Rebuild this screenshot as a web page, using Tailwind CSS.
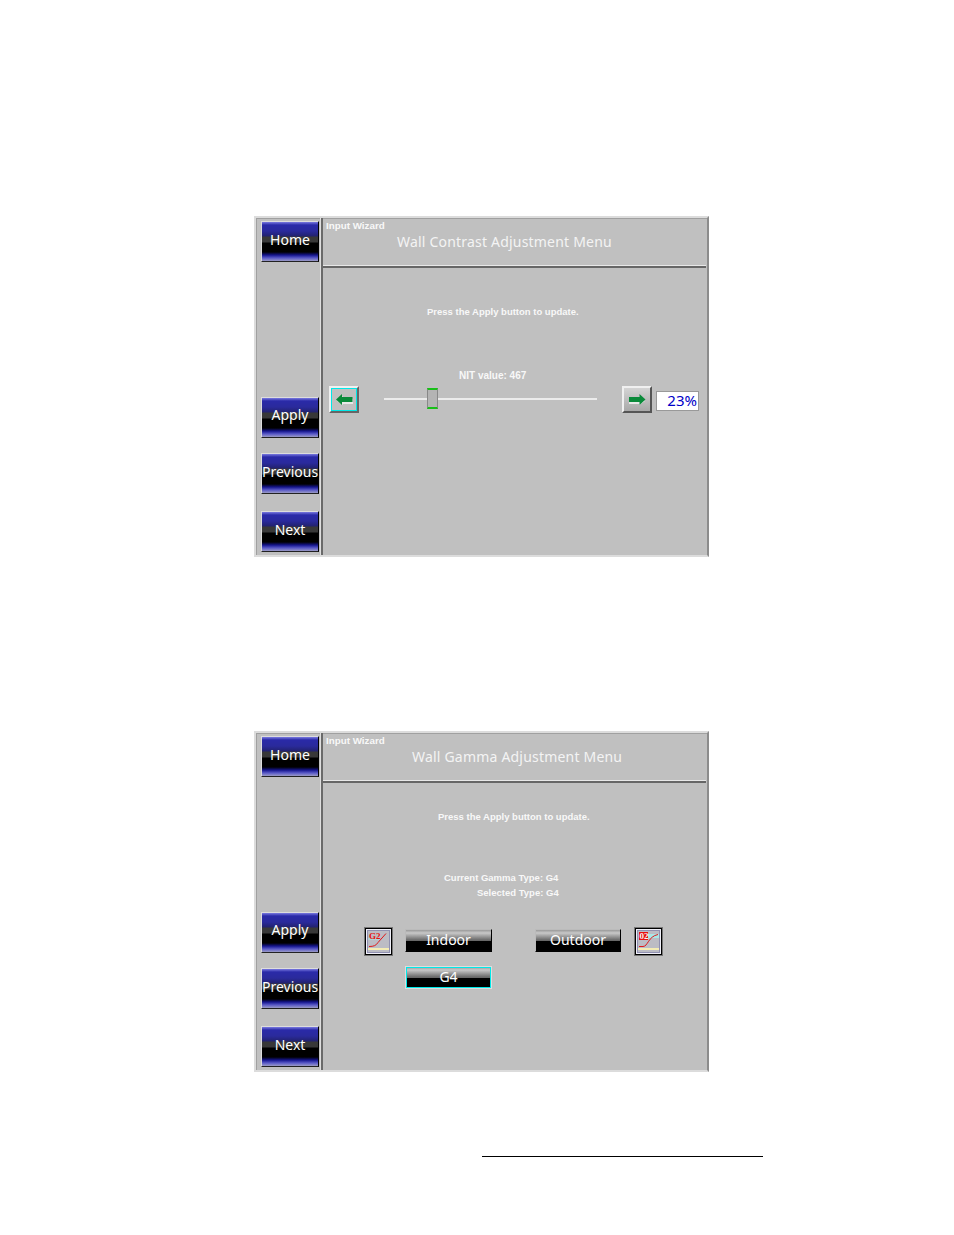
<!DOCTYPE html>
<html lang="en">
<head>
    <meta charset="UTF-8">
    <title>Wall Adjustment Menus</title>
    <script src="https://cdn.jsdelivr.net/npm/@tailwindcss/browser@4"></script>
</head>
<body class="bg-white font-['Noto_Sans',sans-serif]">
<div class="w-[954px] h-[1235px] overflow-hidden pt-[216px] pl-[254px]">

    <!-- Contrast panel -->
    <section class="w-[455px] h-[341px] flex bg-[#c0c0c0] border-2 border-[#dcdcdc] border-r-[#8c8c8c] shadow-[inset_1px_1px_0_#a0a0a0]">
        <aside class="w-[67px] shrink-0 border-r-2 border-[#6a6a6a] shadow-[inset_-1px_0_0_#dedede] pl-[5px] pt-[3px] flex flex-col">
            <button class="w-[58px] h-[41px] pb-[5px] border border-[#ddd] border-r-black border-b-[#222] bg-[linear-gradient(#7a7ae0_0,#2a2aa8_3px,#2a2a9c_9px,#222270_14px,#383838_15px,#383838_20px,#000_21px,#000_30px,#14148c_33px,#5a5ac8_36px,#b0b0c4_40px)] text-white text-[14px]">Home</button>
            <button class="mt-[135px] w-[58px] h-[41px] pb-[7px] border border-[#ddd] border-r-black border-b-[#222] bg-[linear-gradient(#7a7ae0_0,#2a2aa8_3px,#2a2a9c_9px,#222270_14px,#383838_15px,#383838_20px,#000_21px,#000_30px,#14148c_33px,#5a5ac8_36px,#b0b0c4_40px)] text-white text-[14px]">Apply</button>
            <button class="mt-[15px] w-[58px] h-[41px] pb-[5px] border border-[#ddd] border-r-black border-b-[#222] bg-[linear-gradient(#7a7ae0_0,#2a2aa8_3px,#2a2a9c_9px,#222270_14px,#383838_15px,#383838_20px,#000_21px,#000_30px,#14148c_33px,#5a5ac8_36px,#b0b0c4_40px)] text-white text-[14px] whitespace-nowrap">Previous</button>
            <button class="mt-[17px] w-[58px] h-[41px] pb-[5px] border border-[#ddd] border-r-black border-b-[#222] bg-[linear-gradient(#7a7ae0_0,#2a2aa8_3px,#2a2a9c_9px,#222270_14px,#383838_15px,#383838_20px,#000_21px,#000_30px,#14148c_33px,#5a5ac8_36px,#b0b0c4_40px)] text-white text-[14px]">Next</button>
        </aside>
        <div class="flex-1 flex flex-col">
            <header class="h-[50px] border-b-2 border-b-[#666] shadow-[0_-1px_0_#e8e8e8_inset] mr-[1px]">
                <p class="font-['Liberation_Sans',sans-serif] font-bold text-[9.800000px] leading-[14px] pt-px pl-[3px] text-[#f8f8f8]">Input Wizard</p>
                <h2 class="text-[14px] leading-[18px] pl-[74px] text-[#f4f4f4] tracking-[0.2px]">Wall Contrast Adjustment Menu</h2>
            </header>
            <p class="font-['Liberation_Sans',sans-serif] font-bold text-[9.5px] leading-[12px] mt-[38px] pl-[104px] text-[#f8f8f8]">Press the Apply button to update.</p>
            <p class="font-['Liberation_Sans',sans-serif] font-bold text-[10px] leading-[12px] mt-[52px] pl-[136px] text-[#f8f8f8]">NIT value: 467</p>
            <div class="flex items-center mt-[4px] pl-[6px]">
                <button class="w-[30px] h-[27px] flex items-center justify-center border-2 border-[#f0f0f0] border-r-[#666] border-b-[#666] shadow-[inset_0_0_0_1px_#00e8e8] bg-[#c0c0c0]">
                    <svg width="17" height="12" viewBox="0 0 17 12"><path d="M1 7 7 2v3h10v5H7v1z" fill="#e8e8e8"/><path d="M0 5.5 6 0v3h10.500v5H6v3z" fill="#0a8a3a"/></svg>
                </button>
                <div class="relative w-[213px] h-[2px] ml-[25px] mb-[2px] bg-[#ececec]">
                    <span class="absolute left-[43px] -top-[10px] w-[11px] h-[21px] bg-[#b4b4b4] border border-[#888] border-y-2 border-y-[#18c018]"></span>
                </div>
                <button class="w-[30px] h-[27px] ml-[25px] flex items-center justify-center border-2 border-[#f0f0f0] border-r-[#555] border-b-[#555] bg-[linear-gradient(#d4d4d4,#a8a8a8)]">
                    <svg width="17" height="12" viewBox="0 0 17 12"><path d="M16 7 10 2v3H0v5h10v1z" fill="#e8e8e8"/><path d="M16.500 5.500 10.500 0v3H0v5h10.500v3z" fill="#0a8a3a"/></svg>
                </button>
                <output class="w-[43px] h-[20px] ml-[4px] mt-[3px] bg-white border border-[#999] text-[#0000c8] text-[15px] leading-[16px] text-right pr-[1px]">23%</output>
            </div>
        </div>
    </section>

    <!-- Gamma panel -->
    <section class="mt-[174px] w-[455px] h-[341px] flex bg-[#c0c0c0] border-2 border-[#dcdcdc] border-r-[#8c8c8c] shadow-[inset_1px_1px_0_#a0a0a0]">
        <aside class="w-[67px] shrink-0 border-r-2 border-[#6a6a6a] shadow-[inset_-1px_0_0_#dedede] pl-[5px] pt-[3px] flex flex-col">
            <button class="w-[58px] h-[41px] pb-[5px] border border-[#ddd] border-r-black border-b-[#222] bg-[linear-gradient(#7a7ae0_0,#2a2aa8_3px,#2a2a9c_9px,#222270_14px,#383838_15px,#383838_20px,#000_21px,#000_30px,#14148c_33px,#5a5ac8_36px,#b0b0c4_40px)] text-white text-[14px]">Home</button>
            <button class="mt-[135px] w-[58px] h-[41px] pb-[7px] border border-[#ddd] border-r-black border-b-[#222] bg-[linear-gradient(#7a7ae0_0,#2a2aa8_3px,#2a2a9c_9px,#222270_14px,#383838_15px,#383838_20px,#000_21px,#000_30px,#14148c_33px,#5a5ac8_36px,#b0b0c4_40px)] text-white text-[14px]">Apply</button>
            <button class="mt-[15px] w-[58px] h-[41px] pb-[5px] border border-[#ddd] border-r-black border-b-[#222] bg-[linear-gradient(#7a7ae0_0,#2a2aa8_3px,#2a2a9c_9px,#222270_14px,#383838_15px,#383838_20px,#000_21px,#000_30px,#14148c_33px,#5a5ac8_36px,#b0b0c4_40px)] text-white text-[14px] whitespace-nowrap">Previous</button>
            <button class="mt-[17px] w-[58px] h-[41px] pb-[5px] border border-[#ddd] border-r-black border-b-[#222] bg-[linear-gradient(#7a7ae0_0,#2a2aa8_3px,#2a2a9c_9px,#222270_14px,#383838_15px,#383838_20px,#000_21px,#000_30px,#14148c_33px,#5a5ac8_36px,#b0b0c4_40px)] text-white text-[14px]">Next</button>
        </aside>
        <div class="flex-1 flex flex-col">
            <header class="h-[50px] border-b-2 border-b-[#666] shadow-[0_-1px_0_#e8e8e8_inset] mr-[1px]">
                <p class="font-['Liberation_Sans',sans-serif] font-bold text-[9.800000px] leading-[14px] pt-px pl-[3px] text-[#f8f8f8]">Input Wizard</p>
                <h2 class="text-[14px] leading-[18px] pl-[89px] text-[#f4f4f4] tracking-[0.2px]">Wall Gamma Adjustment Menu</h2>
            </header>
            <p class="font-['Liberation_Sans',sans-serif] font-bold text-[9.5px] leading-[12px] mt-[28px] pl-[115px] text-[#f8f8f8]">Press the Apply button to update.</p>
            <p class="font-['Liberation_Sans',sans-serif] font-bold text-[9.5px] leading-[15px] mt-[47px] pl-[121px] text-[#f8f8f8]">Current Gamma Type: G4</p>
            <p class="font-['Liberation_Sans',sans-serif] font-bold text-[9.5px] leading-[15px] pl-[154px] text-[#f8f8f8]">Selected Type: G4</p>
            <div class="flex items-center mt-[27px] pl-[41px]">
                <span class="w-[29px] h-[29px] border border-[#777] shadow-[inset_0_0_0_1px_#000,inset_0_0_0_2px_#f0f0f8,inset_0_0_0_3px_#9090b0] flex items-center justify-center">
                    <svg width="21" height="21" viewBox="0 0 21 21"><rect width="21" height="21" fill="#bcbcc4"/><path d="M0 8h12" stroke="#a8e8e8"/><path d="M0 18h21" stroke="#f4ecb4" stroke-width="2"/><path d="M1 15.500c5 0 7-1 9-4l8-9" stroke="#e01818" fill="none"/><text x="1" y="8" font-family="Liberation Serif" font-weight="700" font-size="9" fill="#e81010">G2</text></svg>
                </span>
                <button class="w-[87px] h-[23px] mb-[2px] ml-[12px] pb-px border border-[#bbb] border-r-black border-b-black bg-[linear-gradient(#999_0,#c8c8c8_3px,#6a6a6a_10px,#666_11px,#000_11px)] text-white text-[14px] leading-none">Indoor</button>
                <button class="w-[86px] h-[23px] mb-[2px] ml-[43px] pb-px border border-[#bbb] border-r-black border-b-black bg-[linear-gradient(#999_0,#c8c8c8_3px,#6a6a6a_10px,#666_11px,#000_11px)] text-white text-[14px] leading-none">Outdoor</button>
                <span class="w-[29px] h-[29px] ml-[13px] border border-[#777] shadow-[inset_0_0_0_1px_#000,inset_0_0_0_2px_#f0f0f8,inset_0_0_0_3px_#9090b0] flex items-center justify-center">
                    <svg width="21" height="21" viewBox="0 0 21 21"><rect width="21" height="21" fill="#bcbcc4"/><path d="M9 3h12v4H9z" fill="#a8e8e8"/><path d="M0 18h21" stroke="#f4ecb4" stroke-width="2"/><path d="M1 15.500h4c5 0 5-10 15-12" stroke="#e01818" fill="none"/><rect x="1" y="1" width="9" height="8" fill="#e81010"/><text x="1.500" y="8" font-family="Liberation Serif" font-weight="700" font-size="9" fill="#f4f4f4">02</text></svg>
                </span>
            </div>
            <button class="w-[87px] h-[23px] mt-[10px] ml-[82px] pb-[2px] border border-[#ddd] shadow-[inset_0_0_0_1px_#00e8e8] bg-[linear-gradient(#999_0,#c8c8c8_3px,#6a6a6a_10px,#666_11px,#000_11px)] text-white text-[14px] leading-none">G4</button>
        </div>
    </section>

    <!-- Page footer rule -->
    <div class="w-[281px] h-px ml-[228px] mt-[84px] bg-black"></div>
</div>
</body>
</html>
